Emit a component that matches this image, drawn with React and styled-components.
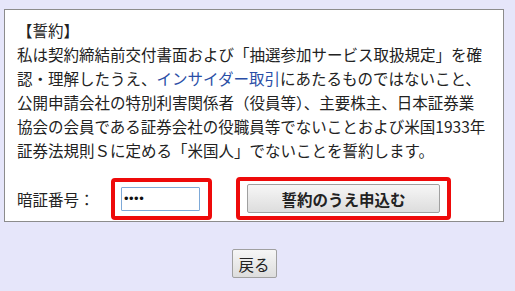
import React from 'react'
import styled, { createGlobalStyle } from 'styled-components'

const GlobalStyle = createGlobalStyle`
    html, body {
        margin: 0;
        padding: 0;
        background-color: #e6e6fa;
    }
    body {
        font-family: "Noto Sans CJK JP", "Noto Sans", sans-serif;
        color: #222;
    }
`

function App() {
    return (
    <>
    <GlobalStyle />
    <StPage>
        <StPanel>
            <StPledge>
                【誓約】<br />
                私は契約締結前交付書面および「抽選参加サービス取扱規定」を確<br />
                認・理解したうえ、<StLink href="#">インサイダー取引</StLink>にあたるものではないこと、<br />
                公開申請会社の特別利害関係者（役員等）、主要株主、日本証券業<br />
                協会の会員である証券会社の役職員等でないことおよび米国1933年<br />
                証券法規則Ｓに定める「米国人」でないことを誓約します。
            </StPledge>
            <StFormRow>
                <StLabel>暗証番号：</StLabel>
                <StHighlight $pad="5px 8px 5px 6px">
                    <StInput type="password" defaultValue="1234" readOnly />
                </StHighlight>
                <StHighlight $pad="3px 7px">
                    <StSubmit type="button">誓約のうえ申込む</StSubmit>
                </StHighlight>
            </StFormRow>
        </StPanel>
        <StBackRow>
            <StBack type="button">戻る</StBack>
        </StBackRow>
    </StPage>
    </>
    )
}

export default App

const StPage = styled.div`
    padding: 9px 11px 0 4px;
    width: 515px;
    height: 291px;
    box-sizing: border-box;
`
const StPanel = styled.div`
    width: 500px;
    box-sizing: border-box;
    background-color: #fff;
    border: 1px solid #8c8c8c;
    padding: 8px 12px 1px 12px;
`
const StPledge = styled.p`
    margin: 0;
    font-size: 15.5px;
    line-height: 24px;
    white-space: nowrap;
    letter-spacing: 0;
`
const StLink = styled.a`
    color: #2a4ea6;
    text-decoration: none;
`
const StFormRow = styled.div`
    display: flex;
    align-items: center;
    margin-top: 15px;
`
const StLabel = styled.span`
    font-size: 15.5px;
    width: 94px;
`
const StHighlight = styled.div`
    display: flex;
    align-items: center;
    border: 4px solid #ee0a0a;
    border-radius: 4px;
    padding: ${(props) => props.$pad};
    margin-right: 24px;
`
const StInput = styled.input`
    width: 79px;
    height: 24px;
    box-sizing: border-box;
    border: 1px solid #7da9d8;
    border-radius: 1px;
    padding: 0 2px;
    font-family: "Liberation Sans", sans-serif;
    font-size: 13px;
    letter-spacing: 0.5px;
    outline: none;
    color: #111;
`
const StSubmit = styled.button`
    width: 193px;
    height: 29px;
    border: 1px solid #a0a0a0;
    border-radius: 2px;
    background: linear-gradient(#f6f6f6, #dddddd);
    font-family: "Noto Sans CJK JP", sans-serif;
    font-size: 15.5px;
    font-weight: 700;
    color: #222;
    padding: 0;
    cursor: pointer;
`
const StBackRow = styled.div`
    width: 500px;
    display: flex;
    justify-content: center;
    margin-top: 27px;
`
const StBack = styled.button`
    width: 45px;
    height: 29px;
    border: 1px solid #a0a0a0;
    border-radius: 2px;
    background: linear-gradient(#f6f6f6, #dddddd);
    font-family: "Noto Sans CJK JP", sans-serif;
    font-size: 15.5px;
    color: #222;
    padding: 0;
    cursor: pointer;
`
